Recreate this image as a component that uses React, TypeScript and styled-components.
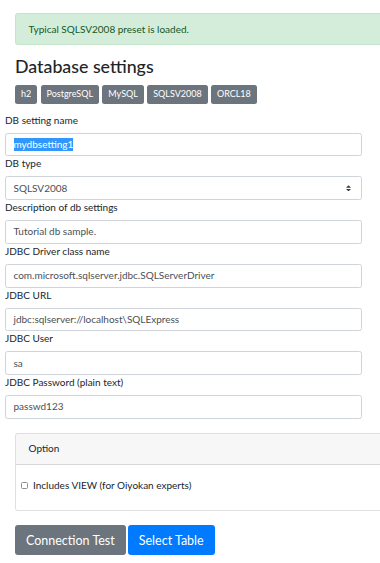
import React from "react";
import styled, { createGlobalStyle } from "styled-components";

const Global = createGlobalStyle`
  html, body { margin: 0; padding: 0; background: #fff; }
  body {
    font-family: Lato, "Noto Sans", "Liberation Sans", sans-serif;
    font-size: 10px;
    line-height: 1.5;
    color: #212529;
    overflow: hidden;
    width: 380px;
    height: 563px;
  }
  * { box-sizing: border-box; }
`;

const Page = styled.div`
  display: flex;
  flex-direction: column;
  padding-top: 13px;
  width: 380px;
  overflow: hidden;
`;

const Alert = styled.div`
  margin: 0 -40px 0 15px;
  padding: 7.5px 12.5px;
  background: #d4edda;
  border: 1px solid #c3e6cb;
  border-radius: 2.5px;
  color: #155724;
  line-height: 15px;
`;

const Title = styled.h3`
  margin: 10px 0 7.5px 15px;
  font-size: 17.8px;
  font-weight: 500;
  line-height: 21px;
  color: #212529;
  padding-top: 1px;
`;

const PresetRow = styled.div`
  display: flex;
  gap: 3.3px;
  margin-left: 15px;
`;

const Preset = styled.span`
  display: inline-flex;
  align-items: center;
  height: 19px;
  padding: 0 6px;
  background: #6c757d;
  color: #fff;
  font-size: 9px;
  border-radius: 2.5px;
`;

const Form = styled.div`
  display: flex;
  flex-direction: column;
  margin-top: 9px;
  padding: 0 18px 0 5px;
`;

const Label = styled.label`
  display: block;
  line-height: 15px;
  margin-bottom: 5px;
`;

const Field = styled.div`
  display: flex;
  align-items: center;
  height: 23.75px;
  padding: 0 7.5px;
  border: 1px solid #ced4da;
  border-radius: 2.5px;
  color: #495057;
  background: #fff;
  line-height: 15px;
`;

const Selected = styled.span`
  background: #3297fd;
  color: #fff;
  line-height: 12.5px;
`;

const SelectField = styled(Field)`
  justify-content: space-between;
`;

const Card = styled.div`
  margin: 14px -40px 0 15px;
  border: 1px solid rgba(0, 0, 0, 0.125);
  border-radius: 2.5px;
`;

const CardHeader = styled.div`
  padding: 7.5px 12.5px;
  line-height: 15px;
  background: rgba(0, 0, 0, 0.03);
  border-bottom: 1px solid rgba(0, 0, 0, 0.125);
`;

const CardBody = styled.div`
  padding: 13px 5px 17px;
`;

const Check = styled.label`
  display: flex;
  align-items: center;
  gap: 5px;
  line-height: 15px;
`;

const Box = styled.span`
  width: 7px;
  height: 7px;
  border: 1px solid #8f8f8f;
  border-radius: 1.5px;
  background: #fff;
`;

const Buttons = styled.div`
  display: flex;
  gap: 2px;
  margin: 14.5px 0 0 15px;
`;

const Button = styled.button<{ $primary?: boolean }>`
  height: 29.5px;
  padding: 0 11px;
  border: none;
  border-radius: 3px;
  font-family: inherit;
  font-size: 12.5px;
  color: #fff;
  background: ${(p) => (p.$primary ? "#007bff" : "#6c757d")};
`;

const fields: [string, string][] = [
  ["Description of db settings", "Tutorial db sample."],
  ["JDBC Driver class name", "com.microsoft.sqlserver.jdbc.SQLServerDriver"],
  ["JDBC URL", "jdbc:sqlserver://localhost\\SQLExpress"],
  ["JDBC User", "sa"],
  ["JDBC Password (plain text)", "passwd123"],
];

export default function App() {
  return (
    <>
      <Global />
      <Page>
        <Alert>Typical SQLSV2008 preset is loaded.</Alert>
        <Title>Database settings</Title>
        <PresetRow>
          {["h2", "PostgreSQL", "MySQL", "SQLSV2008", "ORCL18"].map((p) => (
            <Preset key={p}>{p}</Preset>
          ))}
        </PresetRow>
        <Form>
          <Label>DB setting name</Label>
          <Field>
            <Selected>mydbsetting1</Selected>
          </Field>
          <Label>DB type</Label>
          <SelectField>
            <span>SQLSV2008</span>
            <svg width="5" height="6.5" viewBox="0 0 4 5" style={{ marginRight: 3 }}>
              <path fill="#343a40" d="M2 0L0 2h4zm0 5L0 3h4z" />
            </svg>
          </SelectField>
          {fields.map(([l, v]) => (
            <React.Fragment key={l}>
              <Label>{l}</Label>
              <Field>{v}</Field>
            </React.Fragment>
          ))}
        </Form>
        <Card>
          <CardHeader>Option</CardHeader>
          <CardBody>
            <Check>
              <Box />
              Includes VIEW (for Oiyokan experts)
            </Check>
          </CardBody>
        </Card>
        <Buttons>
          <Button>Connection Test</Button>
          <Button $primary>Select Table</Button>
        </Buttons>
      </Page>
    </>
  );
}
